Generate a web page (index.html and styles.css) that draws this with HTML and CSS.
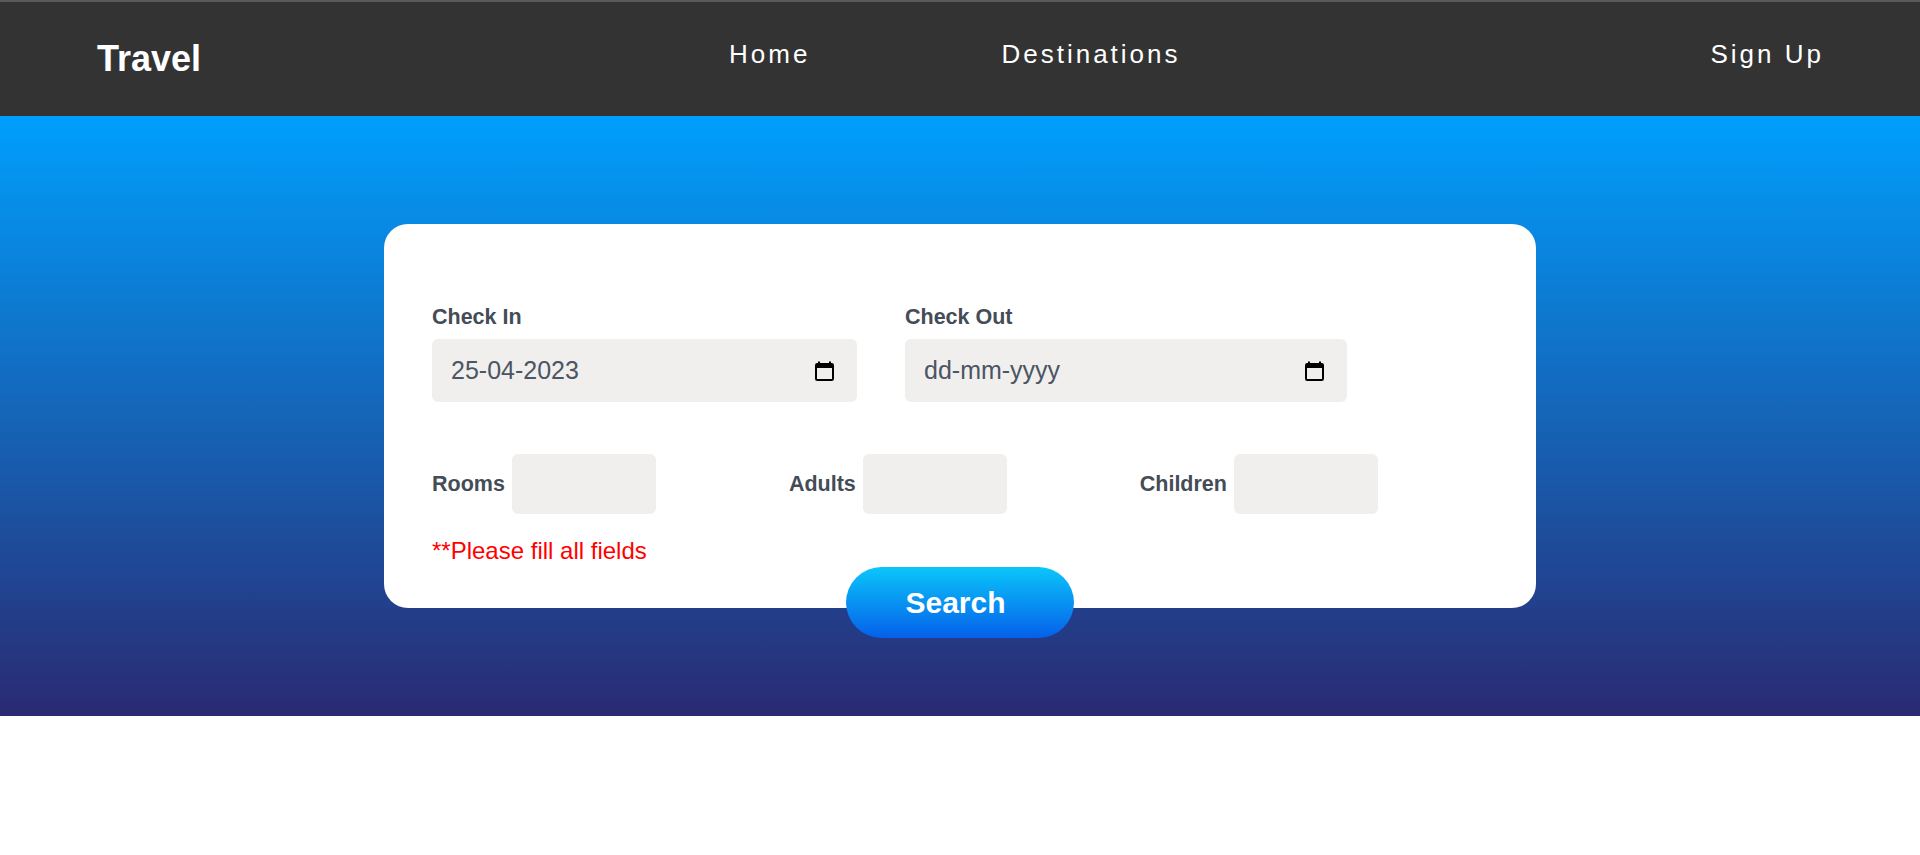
FILE: index.html
```html
<!DOCTYPE html>
<html lang="en">
<head>
<meta charset="utf-8">
<title>Travel</title>
<link rel="stylesheet" href="styles.css">
</head>
<body>
<header class="navbar">
  <div class="logo">Travel</div>
  <nav class="nav-links">
    <a href="#" class="nav-link">Home</a>
    <a href="#" class="nav-link">Destinations</a>
  </nav>
  <a href="#" class="nav-link signup">Sign Up</a>
</header>

<section class="hero">
  <form class="search-card" onsubmit="return false;">
    <div class="row dates">
      <div class="field">
        <label class="label" for="checkin">Check In</label>
        <div class="date-box checkin">
          <input id="checkin" class="date-input" type="text" value="25-04-2023">
          <svg class="cal-icon" width="19" height="20" viewBox="0 0 19 20" aria-hidden="true">
            <rect x="1" y="3" width="17" height="16" rx="1.2" fill="none" stroke="#000" stroke-width="2"/>
            <rect x="1" y="3" width="17" height="4" fill="#000"/>
            <rect x="3" y="0.5" width="2" height="3" fill="#000"/>
            <rect x="14" y="0.5" width="2" height="3" fill="#000"/>
          </svg>
        </div>
      </div>
      <div class="field">
        <label class="label" for="checkout">Check Out</label>
        <div class="date-box checkout">
          <input id="checkout" class="date-input" type="text" placeholder="dd-mm-yyyy">
          <svg class="cal-icon" width="19" height="20" viewBox="0 0 19 20" aria-hidden="true">
            <rect x="1" y="3" width="17" height="16" rx="1.2" fill="none" stroke="#000" stroke-width="2"/>
            <rect x="1" y="3" width="17" height="4" fill="#000"/>
            <rect x="3" y="0.5" width="2" height="3" fill="#000"/>
            <rect x="14" y="0.5" width="2" height="3" fill="#000"/>
          </svg>
        </div>
      </div>
    </div>

    <div class="row counts">
      <div class="count-group">
        <label class="label inline" for="rooms">Rooms</label>
        <input id="rooms" class="count-input" type="number">
      </div>
      <div class="count-group">
        <label class="label inline" for="adults">Adults</label>
        <input id="adults" class="count-input" type="number">
      </div>
      <div class="count-group">
        <label class="label inline" for="children">Children</label>
        <input id="children" class="count-input" type="number">
      </div>
    </div>

    <p class="error">**Please fill all fields</p>

    <button class="search-btn" type="submit">Search</button>
  </form>
</section>
</body>
</html>
```

FILE: styles.css
```css
* {
  box-sizing: border-box;
}

html, body {
  margin: 0;
  padding: 0;
  background: #ffffff;
  font-family: "Liberation Sans", Arial, sans-serif;
}

/* Navbar */
.navbar {
  height: 116px;
  border-top: 2px solid #5a5a5a;
  background: #333333;
  display: flex;
  align-items: center;
  justify-content: space-between;
  padding: 0 96px 0 97px;
}

.logo {
  color: #ffffff;
  font-size: 36px;
  font-weight: bold;
}

.nav-links {
  display: flex;
  gap: 191px;
  margin-right: 2px;
}

.nav-link {
  color: #ffffff;
  text-decoration: none;
  font-size: 26px;
  letter-spacing: 3px;
  margin-bottom: 9px;
}

/* Hero */
.hero {
  height: 600px;
  background: linear-gradient(to bottom, #009ffd, #2a2a72);
  display: flex;
  align-items: center;
  justify-content: center;
}

.search-card {
  position: relative;
  width: 1152px;
  height: 384px;
  background: #ffffff;
  border-radius: 24px;
  padding: 81px 48px 42px;
}

.row {
  display: flex;
}

.dates {
  gap: 48px;
}

.label {
  display: block;
  color: #444c56;
  font-size: 21.5px;
  font-weight: bold;
  margin-bottom: 9px;
}

.label.inline {
  margin-bottom: 0;
}

.date-box {
  display: flex;
  align-items: center;
  height: 63px;
  background: #f0efed;
  border-radius: 6px;
  padding: 0 23px 0 19px;
}

.checkin {
  width: 425px;
}

.checkout {
  width: 442px;
}

.date-input {
  flex: 1;
  min-width: 0;
  border: none;
  outline: none;
  background: transparent;
  padding: 0;
  font-family: "Liberation Sans", Arial, sans-serif;
  font-size: 25px;
  color: #4b5563;
}

.date-input::placeholder {
  color: #4b5563;
  opacity: 1;
}

.cal-icon {
  flex: none;
  display: block;
}

.counts {
  margin-top: 52px;
  gap: 133px;
}

.count-group {
  display: flex;
  align-items: center;
  gap: 7px;
}

.count-input {
  width: 144px;
  height: 60px;
  border: none;
  outline: none;
  border-radius: 6px;
  background: #f0efed;
  font-family: "Liberation Sans", Arial, sans-serif;
  font-size: 22px;
  color: #4b5563;
  padding: 0 10px;
}

.error {
  margin: 23px 0 0;
  color: #ff0000;
  font-size: 24px;
}

.search-btn {
  position: absolute;
  left: 50%;
  bottom: -30px;
  transform: translateX(-50%);
  width: 228px;
  height: 71px;
  border: none;
  border-radius: 36px;
  background: linear-gradient(to bottom, #0bc6fa, #0560ea);
  color: #ffffff;
  font-family: "Liberation Sans", Arial, sans-serif;
  font-size: 30px;
  font-weight: bold;
  padding: 0 9px 0 0;
  cursor: pointer;
}
```
